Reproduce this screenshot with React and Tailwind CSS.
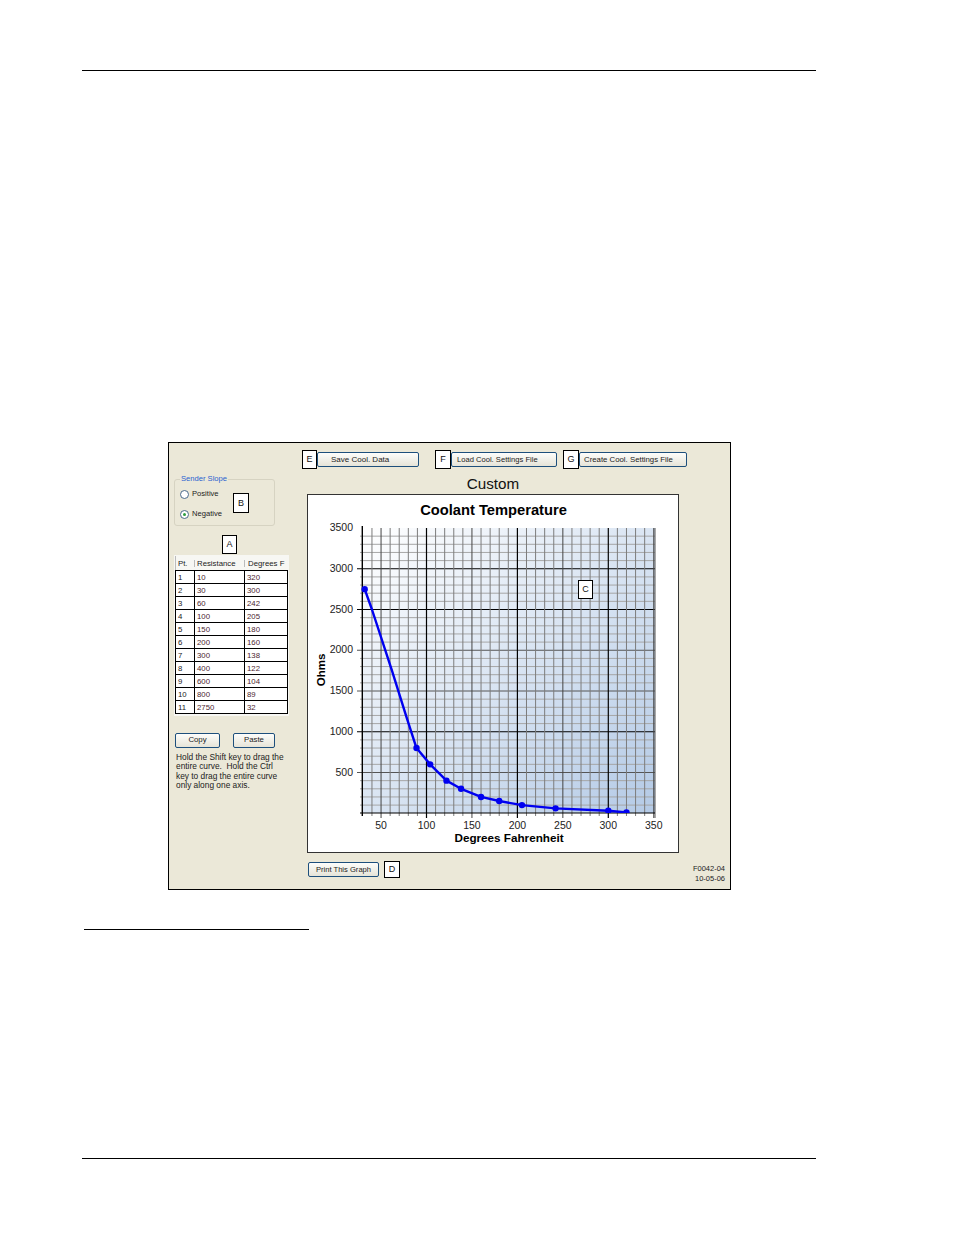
import React from 'react';

const rows = [
  ['1', '10', '320'],
  ['2', '30', '300'],
  ['3', '60', '242'],
  ['4', '100', '205'],
  ['5', '150', '180'],
  ['6', '200', '160'],
  ['7', '300', '138'],
  ['8', '400', '122'],
  ['9', '600', '104'],
  ['10', '800', '89'],
  ['11', '2750', '32'],
];

// chart scale, in page pixels
const xOf = (deg) => 426.5 + (deg - 100) * 0.909;
const yOf = (ohm) => 813.25 - ohm * 0.0815;

const degTicks = [];
for (let d = 40; d <= 350; d += 10) degTicks.push(d);
const ohmTicks = [];
for (let o = 100; o <= 3400; o += 100) ohmTicks.push(o);

const curve = rows.map((r) => [xOf(Number(r[2])), yOf(Number(r[1]))]).reverse();
const curvePath =
  `M${curve[0][0]} ${curve[0][1]} ` +
  `L${xOf(40)} ${yOf(2500)} L${xOf(62)} ${yOf(1750)} L${xOf(78)} ${yOf(1180)} ` +
  curve.slice(1).map((p) => `L${p[0]} ${p[1]}`).join(' ');

const Tag = ({ children, className = '' }) => (
  <div className={`flex items-center justify-center bg-white border border-black text-[9px] leading-none text-[#111] font-['Liberation_Sans',sans-serif] shrink-0 ${className}`}>
    {children}
  </div>
);

const Btn = ({ children, className = '' }) => (
  <div className={`flex items-center h-[15px] rounded-[2px] border border-[#1d4f7c] bg-gradient-to-b from-[#fdfdfb] to-[#e6e4d8] leading-none text-[#222] shrink-0 ${className}`}>
    {children}
  </div>
);

const Radio = ({ label, checked }) => (
  <div className="flex items-center h-[10px] gap-[3px] text-[7.6px] leading-none text-[#222]">
    <span className="flex items-center justify-center w-[9px] h-[9px] rounded-full border border-[#4b6b8c] bg-white">
      {checked && <span className="w-[3px] h-[3px] rounded-full bg-[#2f9e3f]" />}
    </span>
    {label}
  </div>
);

const Chart = () => (
  <svg viewBox="307 494 372 359" className="w-[372px] h-[359px] block" fontFamily="'Liberation Sans', sans-serif">
    <defs>
      <linearGradient id="plotBg" x1="0" y1="0" x2="1" y2="1">
        <stop offset="0" stopColor="#ffffff" />
        <stop offset="1" stopColor="#b4cae6" />
      </linearGradient>
      <clipPath id="plotClip">
        <rect x="355" y="520" width="300" height="293" />
      </clipPath>
    </defs>
    <rect x="362" y="528" width="293" height="285" fill="url(#plotBg)" />

    {ohmTicks.map((o) => {
      const major = o === 3000 || o === 2500 || o === 1000;
      const mid = o % 500 === 0;
      return (
        <line
          key={o}
          x1={mid ? 357 : 360}
          x2="655"
          y1={yOf(o)}
          y2={yOf(o)}
          stroke={major ? '#000' : mid ? '#555' : '#a6a6a6'}
          strokeWidth={major ? 1.2 : 1}
        />
      );
    })}
    {degTicks.map((d) => {
      const major = d % 100 === 0;
      const mid = d % 50 === 0;
      return (
        <line
          key={d}
          x1={xOf(d)}
          x2={xOf(d)}
          y1="528"
          y2={mid ? 818 : 816}
          stroke={major ? '#000' : mid ? '#444' : '#7c7c7c'}
          strokeWidth={major ? 1.2 : 1}
        />
      );
    })}
    <line x1="362.3" x2="362.3" y1="526" y2="816" stroke="#000" strokeWidth="1.4" />
    <line x1="655" x2="655" y1="528" y2="818" stroke="#555" strokeWidth="1" />
    <line x1="360" x2="655" y1="813" y2="813" stroke="#000" strokeWidth="1.2" />

    <g clipPath="url(#plotClip)">
      <path d={curvePath} fill="none" stroke="#0000f0" strokeWidth="2.4" strokeLinejoin="round" />
      {curve.map((p) => (
        <circle key={p[0]} cx={p[0]} cy={p[1]} r="3.2" fill="#0000f0" />
      ))}
    </g>

    <text x="493.5" y="515" textAnchor="middle" fontSize="14.7" fontWeight="700" fill="#000">Coolant Temperature</text>
    {[3500, 3000, 2500, 2000, 1500, 1000, 500].map((o) => (
      <text key={o} x="353" y={yOf(o) + 3} textAnchor="end" fontSize="10.5" fill="#222">{o}</text>
    ))}
    {[50, 100, 150, 200, 250, 300, 350].map((d) => (
      <text key={d} x={xOf(d)} y="828.5" textAnchor="middle" fontSize="10.5" fill="#222">{d}</text>
    ))}
    <text x="509" y="842" textAnchor="middle" fontSize="11.7" fontWeight="700" fill="#000">Degrees Fahrenheit</text>
    <text transform="translate(325 670) rotate(-90)" textAnchor="middle" fontSize="11.5" fontWeight="700" fill="#000">Ohms</text>
  </svg>
);

export default function App() {
  return (
    <div className="w-[954px] h-[1235px] bg-white flex flex-col items-start font-['Liberation_Sans',sans-serif] overflow-hidden">
      <div className="mt-[70px] ml-[82px] w-[734px] h-px bg-black" />

      <div className="mt-[371px] ml-[168px] w-[563px] h-[448px] border border-black bg-[#ebe8d8] flex">
        {/* left column */}
        <div className="w-[133px] shrink-0 pt-[36px] pl-[5px] flex flex-col items-start">
          <div className="relative w-[101px] h-[47px] rounded-[3px] border border-[#d6d3c2] flex flex-col gap-[10px] pt-[9px] pl-[5px]">
            <span className="absolute -top-[6px] left-[5px] px-px bg-[#ebe8d8] text-[7.6px] leading-[10px] text-[#2a62d0]">Sender Slope</span>
            <Radio label="Positive" />
            <Radio label="Negative" checked />
            <Tag className="absolute left-[58px] top-[13px] w-[16px] h-[20px]">B</Tag>
          </div>

          <Tag className="mt-[9px] ml-[48px] w-[15px] h-[19px]">A</Tag>

          <div className="mt-px w-[115px] h-[161px] bg-[#f7f7f3] pt-[1px] pl-[1px] text-[7.8px] leading-none">
            <div className="flex h-[14px] items-center pt-px text-[#222] border-l border-[#bbb]">
              <div className="w-[18px] pl-[2px]">Pt.</div>
              <div className="w-[50px] pl-[2px] border-l border-[#bbb]">Resistance</div>
              <div className="w-[44px] pl-[3px] border-l border-[#bbb]">Degrees F</div>
            </div>
            <div className="border-l border-t border-black bg-white w-[113px]">
              {rows.map((r) => (
                <div key={r[0]} className="flex h-[13px] items-center border-b border-black text-[#4d2630]">
                  <div className="w-[18px] h-full flex items-center pt-[2px] pl-[2px] text-[#222]">{r[0]}</div>
                  <div className="w-[50px] h-full flex items-center pt-[2px] pl-[2px] border-l border-black">{r[1]}</div>
                  <div className="w-[44px] h-full flex items-center pt-[2px] pl-[2px] border-l border-r border-black">{r[2]}</div>
                </div>
              ))}
            </div>
          </div>

          <div className="mt-[17px] ml-px flex text-[7.8px]">
            <Btn className="w-[45px] justify-center pb-px">Copy</Btn>
            <Btn className="w-[42px] ml-[13px] justify-center pb-px">Paste</Btn>
          </div>
          <p className="mt-[5px] ml-[2px] w-[110px] text-[8.35px] leading-[9.4px] text-[#222]">
            Hold the Shift key to drag the entire curve.&nbsp; Hold the Ctrl key to drag the entire curve only along one axis.
          </p>
        </div>

        {/* right column */}
        <div className="flex-1 pt-[7px] flex flex-col items-start">
          <div className="flex items-center h-[19px]">
            <Tag className="w-[15px] h-[19px]">E</Tag>
            <Btn className="w-[102px] pl-[13px] text-[8px]">Save Cool. Data</Btn>
            <Tag className="ml-[16px] w-[16px] h-[19px]">F</Tag>
            <Btn className="w-[106px] pl-[5px] text-[7.6px]">Load Cool. Settings File</Btn>
            <Tag className="ml-[6px] w-[16px] h-[19px]">G</Tag>
            <Btn className="w-[108px] pl-[4px] text-[7.8px]">Create Cool. Settings File</Btn>
          </div>
          <div className="ml-[5px] w-[372px] h-[25px] pt-[6px] text-center text-[15.2px] leading-[17px] text-[#111]">Custom</div>
          <div className="relative ml-[5px] w-[372px] h-[359px] bg-white outline outline-1 -outline-offset-1 outline-[#333]">
            <Chart />
            <Tag className="absolute left-[271px] top-[86px] w-[15px] h-[19px] border-[#555]">C</Tag>
          </div>
          <div className="mt-[8px] w-full flex items-start">
            <Btn className="ml-[6px] mt-px w-[71px] justify-center text-[7.6px]">Print This Graph</Btn>
            <Tag className="ml-[5px] w-[16px] h-[17px]">D</Tag>
            <div className="ml-auto mr-[5px] mt-[3px] text-right text-[7.5px] leading-[10px] text-[#222]">
              F0042-04
              <br />
              10-05-06
            </div>
          </div>
        </div>
      </div>

      <div className="mt-[39px] ml-[84px] w-[225px] h-px bg-black" />
      <div className="mt-[228px] ml-[82px] w-[734px] h-px bg-black" />
    </div>
  );
}
